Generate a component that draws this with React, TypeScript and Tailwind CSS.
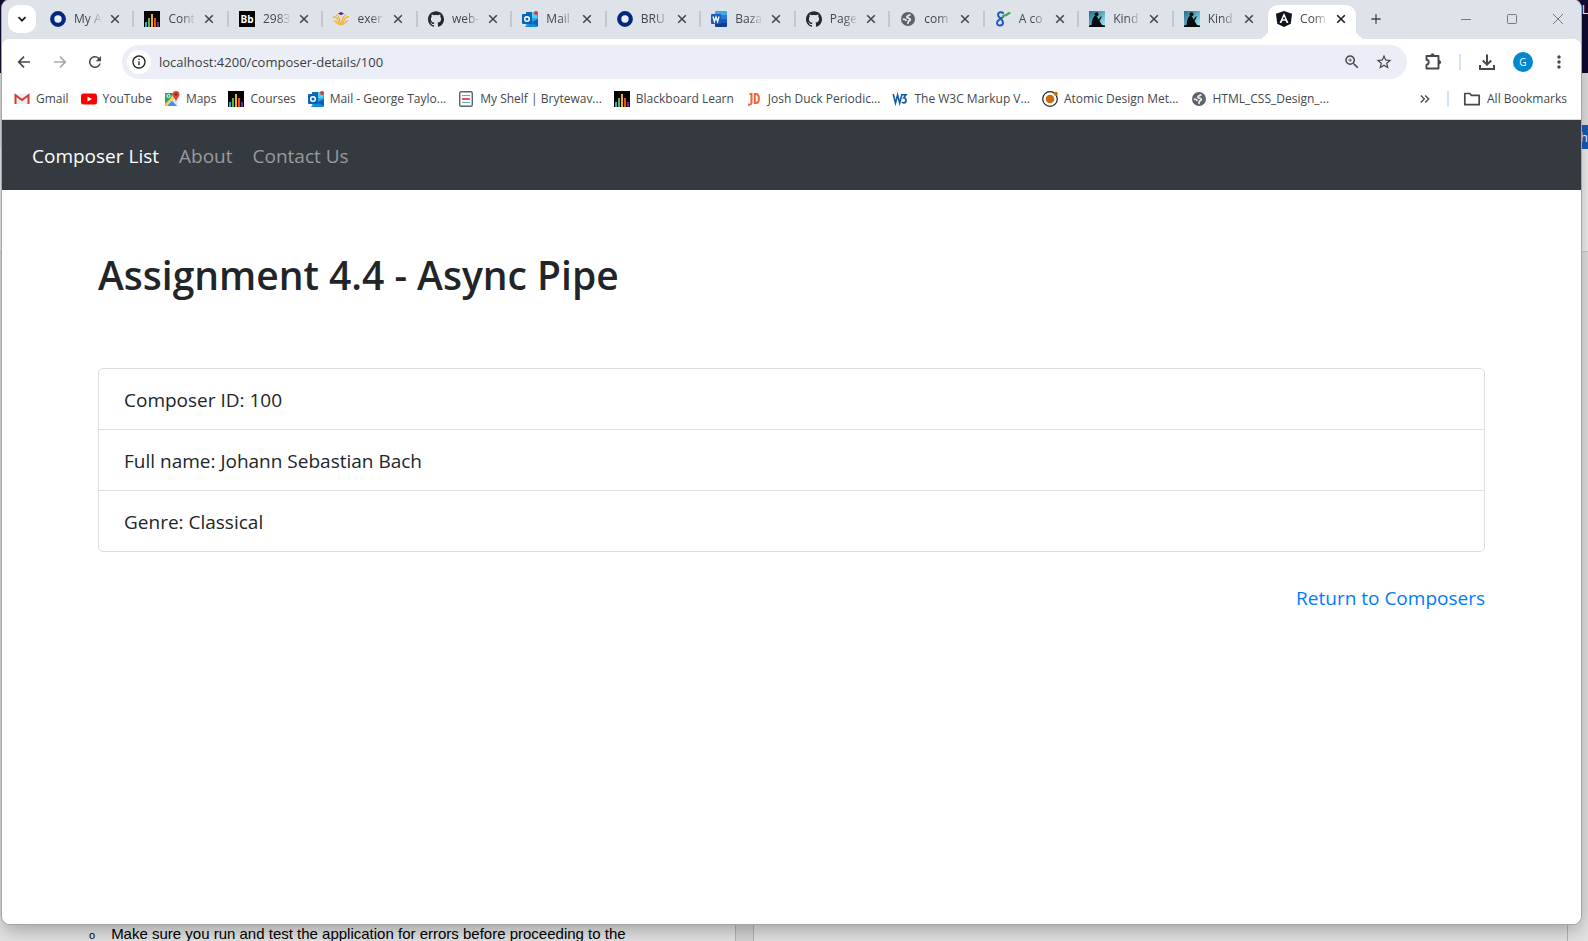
import React from "react";
import { SiGithub } from "react-icons/si";
import {
  MdRefresh,
  MdInfoOutline,
  MdZoomIn,
  MdStarOutline,
  MdMoreVert,
  MdKeyboardDoubleArrowRight,
  MdAdd,
} from "react-icons/md";

function Ring() {
  return (
    <svg viewBox="0 0 16 16" className="size-4 shrink-0">
      <circle cx="8" cy="8" r="5.8" fill="#e9eef8" stroke="#04287c" strokeWidth="4.2" />
    </svg>
  );
}

function Bars() {
  return (
    <svg viewBox="0 0 16 16" className="size-4 shrink-0" shapeRendering="crispEdges">
      <rect width="16" height="16" fill="#000" />
      <rect x="1" y="11" width="2" height="5" fill="#2aa3e8" />
      <rect x="4" y="7" width="2" height="9" fill="#5fb336" />
      <rect x="7" y="3" width="2" height="13" fill="#e8b321" />
      <rect x="10" y="7" width="2" height="9" fill="#ee4a23" />
      <rect x="13" y="11" width="2" height="5" fill="#6d2a8c" />
    </svg>
  );
}

function Blackboard() {
  return (
    <svg viewBox="0 0 16 16" className="size-4 shrink-0">
      <rect width="16" height="16" fill="#000" />
      <text x="8" y="12" textAnchor="middle" fontSize="10" fontWeight="700" fill="#fff" fontFamily="Open Sans, sans-serif">Bb</text>
    </svg>
  );
}

function Hands() {
  return (
    <svg viewBox="0 0 16 16" className="size-4 shrink-0" fill="none" stroke="#f5b324">
      <path d="M5 2.500 8 1l3 1.500L8 4.200z" fill="#4b2a86" stroke="none" />
      <path d="M0 6h2.500C4 7 5.500 9.500 6 14M16 6h-2.500C12 7 10.500 9.500 10 14" strokeWidth="1.300" />
      <path d="M3 3.500c2.200 1 4.200 4.500 4.400 10.500M13 3.500c-2.200 1-4.200 4.500-4.400 10.500" strokeWidth="1.300" />
      <path d="M1 9.800c1.500 0 2.500 1 3.500 3M15 9.800c-1.500 0-2.500 1-3.500 3" strokeWidth="1.200" />
    </svg>
  );
}

function Outlook() {
  return (
    <svg viewBox="0 0 16 16" className="size-4 shrink-0">
      <rect x="4" y="1" width="12" height="14" rx="1" fill="#28a8ea" />
      <path d="M4 1h6v6H4z" fill="#0f6cbd" />
      <path d="M10 1h5v6h-5z" fill="#50d0f5" />
      <path d="M3 15.500 16 8v7a1 1 0 0 1-1 1H3z" fill="#1489d8" />
      <path d="M9 11.500 16 8v7z" fill="#0a63b0" />
      <rect x="0" y="3" width="10" height="10" rx="1" fill="#0964b4" />
      <circle cx="5" cy="8" r="2.300" fill="none" stroke="#fff" strokeWidth="1.500" />
      <circle cx="14" cy="2" r="2" fill="#d63a40" />
    </svg>
  );
}

function Word() {
  return (
    <svg viewBox="0 0 16 16" className="size-4 shrink-0">
      <path d="M4 1a1 1 0 0 1 1-1h10a1 1 0 0 1 1 1v3H4z" fill="#41a5ee" />
      <path d="M4 4h12v4H4z" fill="#2b7cd3" />
      <path d="M4 8h12v4H4z" fill="#185abd" />
      <path d="M4 12h12v3a1 1 0 0 1-1 1H5a1 1 0 0 1-1-1z" fill="#103f91" />
      <rect x="0" y="3" width="10" height="10" rx="1" fill="#185abd" />
      <path d="m2 5.500 1.400 5L5 6l1.600 4.500 1.400-5" fill="none" stroke="#fff" strokeWidth="1.300" />
    </svg>
  );
}

function Globe() {
  return (
    <svg viewBox="0 0 16 16" className="size-4 shrink-0">
      <circle cx="8" cy="8" r="7" fill="#5f6368" />
      <path d="M10 2.800C9.500 4.500 7 4 7 5.800c0 1.400 2.600.6 3 2 .3 1 1.500.9 3.700.7-.4 2.700-2.400 4.900-5.200 5.200l.2-1.700c.2-1.600-1-1.500-1.500-2.500-.5-1.200-2-1-4.900-1.800C2.400 5 4 3 6.300 2.500 8 2.100 9 2.300 10 2.800z" fill="none" stroke="#e2e5ea" strokeWidth="0" />
      <path d="M10.200 3.400c-.6 1.500-3.400 1-3.400 2.700 0 1.500 3.200.6 3.500 2.200.2 1.300-1.800 1.200-2 2.400-.1.900-.3 1.300-.6 2.200M2.800 8.200c1.700 0 2.900.2 3.700 1.600" fill="none" stroke="#e8eaee" strokeWidth="1.800" />
    </svg>
  );
}

function Scribble() {
  return (
    <svg viewBox="0 0 16 16" className="size-4 shrink-0" fill="none" strokeLinecap="round">
      <path d="M8 2C6.500.5 3 1 3 4c0 2.800 5 4 5 7.500 0 4-6 4-6 .5C2 9 6 7.500 8 6" stroke="#2058c7" strokeWidth="2" />
      <path d="M8 5.200c1.200-1.500 2.500-.2 3.500-1.200s1.500-1.500 3-1.800" stroke="#3da857" strokeWidth="2.200" />
    </svg>
  );
}

function Kindle() {
  return (
    <svg viewBox="0 0 16 16" className="size-4 shrink-0">
      <defs>
        <linearGradient id="sky" x1="0" y1="0" x2="1" y2="1">
          <stop offset="0" stopColor="#1c6f8e" />
          <stop offset="1" stopColor="#a9ecfa" />
        </linearGradient>
      </defs>
      <rect width="16" height="16" fill="url(#sky)" />
      <circle cx="7.500" cy="3.300" r="2" fill="#050b0f" />
      <path d="M0 16v-1.500l2.500-.5C3 10 3.500 6.500 5.500 5c1.500-.8 3 .3 3.200 2l.8 1.500 2.500-3.300.8.600L10.500 10l2.500 4 3 .5V16z" fill="#050b0f" />
    </svg>
  );
}

function Angular() {
  return (
    <svg viewBox="0 0 16 16" className="size-4 shrink-0">
      <path d="m8 0 8 2.700-1.200 10L8 16l-6.800-3.300L0 2.700z" fill="#11131c" />
      <path d="m8 2-4.500 10h1.900l.9-2.200h3.400l.9 2.200h1.900zm0 3.500 1.200 2.800H6.800z" fill="#fff" />
    </svg>
  );
}

function Gmail() {
  return (
    <svg viewBox="0 0 16 16" className="size-4 shrink-0">
      <path d="M1 3h14v10H1z" fill="#eceff1" />
      <path d="M1.500 13V4.200L8 9l6.500-4.800V13" fill="none" stroke="#d93a30" strokeWidth="2" />
    </svg>
  );
}

function YouTube() {
  return (
    <svg viewBox="0 0 16 16" className="size-4 shrink-0">
      <rect x="0" y="2.500" width="16" height="11" rx="2.500" fill="#f00" />
      <path d="M6.500 5.500v5L11 8z" fill="#fff" />
    </svg>
  );
}

function Maps() {
  return (
    <svg viewBox="0 0 16 16" className="size-4 shrink-0">
      <rect x="1" y="2" width="13" height="13" rx="1" fill="#e8eaed" />
      <path d="M1 3a1 1 0 0 1 1-1h8L2 14.500a1 1 0 0 1-1-1z" fill="#34a061" />
      <path d="m3 15 5-5.500L13 15z" fill="#4a8af4" />
      <path d="M1 13 11 3l1.500 2L2.500 15z" fill="#fbd04b" />
      <circle cx="4.500" cy="5" r="1.500" fill="none" stroke="#fff" />
      <path d="M12 0a3.500 3.500 0 0 1 3.500 3.500C15.500 6 12.500 7.500 12 11c-.5-3.500-3.500-5-3.500-7.500A3.500 3.500 0 0 1 12 0z" fill="#dc4437" />
      <circle cx="12" cy="3.500" r="1.200" fill="#7d2118" />
    </svg>
  );
}

function Shelf() {
  return (
    <svg viewBox="0 0 16 16" className="size-4 shrink-0">
      <rect x="1.700" y=".7" width="12.600" height="14.600" rx="1.500" fill="#fff" stroke="#53657d" strokeWidth="1.400" />
      <path d="M4 4.500h8" stroke="#6d9bd8" />
      <path d="M4 8h8" stroke="#e8415c" strokeWidth="1.800" />
      <path d="M4 11.500h8" stroke="#55b08a" />
    </svg>
  );
}

function Duck() {
  return (
    <svg viewBox="0 0 16 16" className="size-4 shrink-0" fill="none" stroke="#f4623a" strokeWidth="2">
      <path d="M3.500 3h2v8.500c0 2-1.500 2.500-3.500 2M8.800 3v9h1.200c3.800 0 3.800-9 0-9z" />
    </svg>
  );
}

function W3() {
  return (
    <svg viewBox="0 0 16 16" className="size-4 shrink-0" fill="none" stroke="#1459a6" strokeWidth="1.600">
      <path d="M1.200 3 3.500 12 5.600 4l2.100 8L10 3" />
      <path d="M10 3.700h4l-2.300 3c3.200.2 3 5.200.1 5.200-.9 0-1.500-.4-1.800-1" />
    </svg>
  );
}

function Atom() {
  return (
    <svg viewBox="0 0 16 16" className="size-4 shrink-0">
      <circle cx="8" cy="8" r="7.300" fill="#fff" stroke="#222" strokeWidth="1.200" />
      <circle cx="8" cy="8" r="4.300" fill="#c96c0a" />
      <circle cx="13.800" cy="2.800" r="2" fill="#c96c0a" />
    </svg>
  );
}

function GitHub() {
  return <SiGithub className="size-4 shrink-0 text-[#24292f]" />;
}

function Close() {
  return (
    <svg viewBox="0 0 16 16" className="size-4" fill="none" stroke="currentColor" strokeWidth="1.600">
      <path d="m4.200 4.200 7.600 7.600M11.800 4.200l-7.600 7.600" />
    </svg>
  );
}

function Chevron() {
  return (
    <svg viewBox="0 0 16 16" className="size-4" fill="none" stroke="currentColor" strokeWidth="1.800">
      <path d="m4.500 6.200 3.500 3.500 3.500-3.500" />
    </svg>
  );
}

function Arrow({ className }: { className?: string }) {
  return (
    <svg viewBox="0 0 16 16" className={`size-4 ${className ?? ""}`} fill="none" stroke="currentColor" strokeWidth="1.700">
      <path d="M14 8H3M8 2.700 2.700 8 8 13.300" />
    </svg>
  );
}

function Puzzle() {
  return (
    <svg viewBox="0 0 20 20" className="size-5" fill="none" stroke="currentColor" strokeWidth="1.900" strokeLinejoin="round">
      <path d="M3.500 4h12v12.500h-12v-3.800c3-.3 3-4.700 0-5z" />
      <path d="M7.800 3.500a1.700 1.700 0 0 1 3.400 0zM16 8.500a1.700 1.700 0 0 1 0 3.400z" fill="currentColor" strokeWidth="1" />
    </svg>
  );
}

function Download() {
  return (
    <svg viewBox="0 0 20 20" className="size-5" fill="none" stroke="currentColor" strokeWidth="2">
      <path d="M10 2.500V12M5.800 8.500 10 12.700l4.200-4.200M3 13v4h14v-4" />
    </svg>
  );
}

function Folder() {
  return (
    <svg viewBox="0 0 18 18" className="size-[18px] shrink-0" fill="none" stroke="currentColor" strokeWidth="1.700" strokeLinejoin="round">
      <path d="M1.800 3.500h5l1.700 1.800h7.700v9.400H1.800z" />
    </svg>
  );
}

const tabs = [
  { title: "My A", Icon: Ring },
  { title: "Cont", Icon: Bars },
  { title: "2983", Icon: Blackboard },
  { title: "exer", Icon: Hands },
  { title: "web-", Icon: GitHub },
  { title: "Mail", Icon: Outlook },
  { title: "BRU", Icon: Ring },
  { title: "Baza", Icon: Word },
  { title: "Page", Icon: GitHub },
  { title: "com", Icon: Globe },
  { title: "A co", Icon: Scribble },
  { title: "Kind", Icon: Kindle },
  { title: "Kind", Icon: Kindle },
];

const bookmarks = [
  { title: "Gmail", Icon: Gmail },
  { title: "YouTube", Icon: YouTube },
  { title: "Maps", Icon: Maps },
  { title: "Courses", Icon: Bars },
  { title: "Mail - George Taylo...", Icon: Outlook },
  { title: "My Shelf | Brytewav...", Icon: Shelf },
  { title: "Blackboard Learn", Icon: Bars },
  { title: "Josh Duck Periodic...", Icon: Duck },
  { title: "The W3C Markup V...", Icon: W3 },
  { title: "Atomic Design Met...", Icon: Atom },
  { title: "HTML_CSS_Design_...", Icon: Globe },
];

function TabTitle({ children }: { children: string }) {
  return (
    <span className="ml-2 w-7 whitespace-nowrap text-[#45484c] mask-r-from-50%">
      {children}
    </span>
  );
}

function CloseTab({ title }: { title: string }) {
  return (
    <button aria-label={`Close ${title}`} className="ml-[5px] flex size-4 shrink-0 items-center justify-center">
      <Close />
    </button>
  );
}

function TabStrip() {
  return (
    <div className="flex h-[39px] items-center bg-[#dee2e9] pb-px pl-1.5">
      <button aria-label="Search tabs" className="flex size-7 shrink-0 items-center justify-center rounded-[10px] bg-white text-[#1f1f1f]">
        <Chevron />
      </button>
      <div className="ml-1 flex h-full min-w-0 max-w-[1316px] flex-1 text-[12px]">
        {tabs.map(({ title, Icon }, i) => (
          <div key={i} className="flex min-w-0 flex-1 items-center pl-2.5 text-[#45484c]">
            <Icon />
            <TabTitle>{title}</TabTitle>
            <CloseTab title={title} />
            {i < tabs.length - 1 && <span className="ml-auto h-4 w-0.5 bg-[#c5c7cb]" />}
          </div>
        ))}
        <div className="relative mt-[5px] -mb-px flex w-[88px] shrink-0 items-center rounded-t-[10px] bg-white pb-1.5 pl-2 text-[#1f1f1f] before:absolute before:bottom-0 before:-left-2.5 before:size-2.5 before:rounded-br-[10px] before:shadow-[4px_4px_0_0_#fff] after:absolute after:-right-2.5 after:bottom-0 after:size-2.5 after:rounded-bl-[10px] after:shadow-[-4px_4px_0_0_#fff]">
          <Angular />
          <TabTitle>Com</TabTitle>
          <CloseTab title="Composer" />
        </div>
      </div>
      <button aria-label="New tab" className="ml-3 text-[#45484c]">
        <MdAdd className="size-4" />
      </button>
      <div className="ml-auto flex gap-9 pr-[18px] text-[#77797d]">
        <button aria-label="Minimize">
          <svg viewBox="0 0 10 10" className="size-2.5"><path d="M0 5.500h10" stroke="currentColor" /></svg>
        </button>
        <button aria-label="Maximize">
          <svg viewBox="0 0 10 10" className="size-2.5"><rect x=".5" y=".5" width="9" height="9" rx="1" fill="none" stroke="currentColor" /></svg>
        </button>
        <button aria-label="Close window">
          <svg viewBox="0 0 10 10" className="size-2.5"><path d="m0 0 10 10M10 0 0 10" stroke="currentColor" /></svg>
        </button>
      </div>
    </div>
  );
}

function Toolbar() {
  return (
    <div className="flex h-[46px] items-center rounded-t-lg bg-white pr-3 pl-3 text-[#45484c]">
      <button aria-label="Back" className="px-0.5"><Arrow /></button>
      <button aria-label="Forward" className="ml-4 px-0.5 text-[#a6a8ab]"><Arrow className="rotate-180" /></button>
      <button aria-label="Reload" className="ml-3.5 px-0.5"><MdRefresh className="size-[18px]" /></button>
      <div className="ml-4 flex h-[34px] flex-1 items-center rounded-full bg-[#ebeef7] pr-3.5 pl-[5px]">
        <button aria-label="Site information" className="flex size-6 items-center justify-center rounded-full bg-white text-[#1f1f1f]">
          <MdInfoOutline className="size-4" />
        </button>
        <input aria-label="Address" defaultValue="localhost:4200/composer-details/100" className="ml-2 h-6 min-w-0 flex-1 bg-transparent text-[13px] text-[#3a3d41] outline-none" />
        <button aria-label="Zoom"><MdZoomIn className="size-[18px]" /></button>
        <button aria-label="Bookmark this page" className="ml-3.5"><MdStarOutline className="size-[18px]" /></button>
      </div>
      <button aria-label="Extensions" className="ml-4"><Puzzle /></button>
      <span className="ml-4 h-4 w-0.5 bg-[#d3e3fd]" />
      <button aria-label="Downloads" className="ml-4"><Download /></button>
      <button aria-label="Profile" className="ml-4 size-5 rounded-full bg-[#0288d1] text-[10px] leading-5 text-white">G</button>
      <button aria-label="Menu" className="ml-4"><MdMoreVert className="size-5" /></button>
    </div>
  );
}

function BookmarksBar() {
  return (
    <div className="flex h-[35px] items-center border-b border-[#d5d7db] bg-white pr-3.5 pb-1.5 pl-3 text-[12px] text-[#45484c]">
      <div className="flex min-w-0 gap-3 overflow-hidden whitespace-nowrap">
        {bookmarks.map(({ title, Icon }) => (
          <a key={title} href="#" className="flex items-center gap-1.5">
            <Icon />
            {title}
          </a>
        ))}
      </div>
      <button aria-label="More bookmarks" className="ml-auto"><MdKeyboardDoubleArrowRight className="size-4" /></button>
      <span className="ml-3.5 h-4 w-0.5 shrink-0 bg-[#d3e3fd]" />
      <a href="#" className="ml-3.5 flex items-center gap-1.5 whitespace-nowrap">
        <Folder />
        All Bookmarks
      </a>
    </div>
  );
}

function ComposerPage() {
  return (
    <>
      <nav className="flex h-[70px] items-center gap-5 bg-[#343a40] px-[30px] pt-0.5 text-[19px] text-[#979a9e]">
        <a href="#" className="text-white">Composer List</a>
        <a href="#">About</a>
        <a href="#">Contact Us</a>
      </nav>
      <main className="px-24 pt-[61px] text-[19px] text-[#212529]">
        <h1 className="text-[39px] leading-12 font-semibold">Assignment 4.4 - Async Pipe</h1>
        <ul className="mt-[69px] divide-y divide-[#dfdfdf] rounded-[5px] border border-[#dfdfdf]">
          <li className="px-[25px] pt-4 pb-3.5 leading-[30px]">Composer ID: 100</li>
          <li className="px-[25px] pt-4 pb-3.5 leading-[30px]">Full name: Johann Sebastian Bach</li>
          <li className="px-[25px] pt-4 pb-3.5 leading-[30px]">Genre: Classical</li>
        </ul>
        <div className="mt-[31px] text-right leading-[30px]">
          <a href="#" className="text-[#007bff]">Return to Composers</a>
        </div>
      </main>
    </>
  );
}

function Desktop() {
  return (
    <div className="absolute inset-0 flex flex-col bg-[#e4e4e4]" aria-hidden="true">
      <div className="h-[73px] bg-[#0f0b32] text-right text-[12px] leading-5 text-white">L</div>
      <div className="h-[52px]" />
      <div className="ml-auto h-6 w-5 bg-[#1a5cbe] text-right text-[13px] leading-6 text-white">h</div>
      <div className="h-[103px] border-b border-[#cfcfcf] bg-[#f3f3f3]" />
      <div className="flex flex-1 items-end">
        <div className="flex h-full w-[736px] items-end gap-4 border-r border-[#b5b5b5] pl-[89px] font-['Liberation_Sans',sans-serif] text-[15px] leading-3.5 whitespace-nowrap text-black">
          <span className="text-[11px] leading-3">o</span>
          <span>Make sure you run and test the application for errors before proceeding to the</span>
        </div>
        <div className="h-full w-[18px] border-r border-[#b5b5b5] bg-[#d6d6d6]" />
        <div className="mr-5 h-full flex-1 border-r border-[#b5b5b5]" />
      </div>
    </div>
  );
}

export default function App() {
  return (
    <div className="relative flex h-screen flex-col overflow-hidden pr-[7px] pb-[17px] pl-0.5 font-['Open_Sans',sans-serif]">
      <Desktop />
      <div className="relative flex min-h-0 flex-1 flex-col overflow-hidden rounded-lg bg-[#dee2e9] shadow-[0_0_0_1px_#a5a5a5,0_6px_20px_rgba(0,0,0,0.3)]">
        <TabStrip />
        <div className="flex min-h-0 flex-1 flex-col rounded-t-lg bg-white">
          <Toolbar />
          <BookmarksBar />
          <ComposerPage />
        </div>
      </div>
    </div>
  );
}
